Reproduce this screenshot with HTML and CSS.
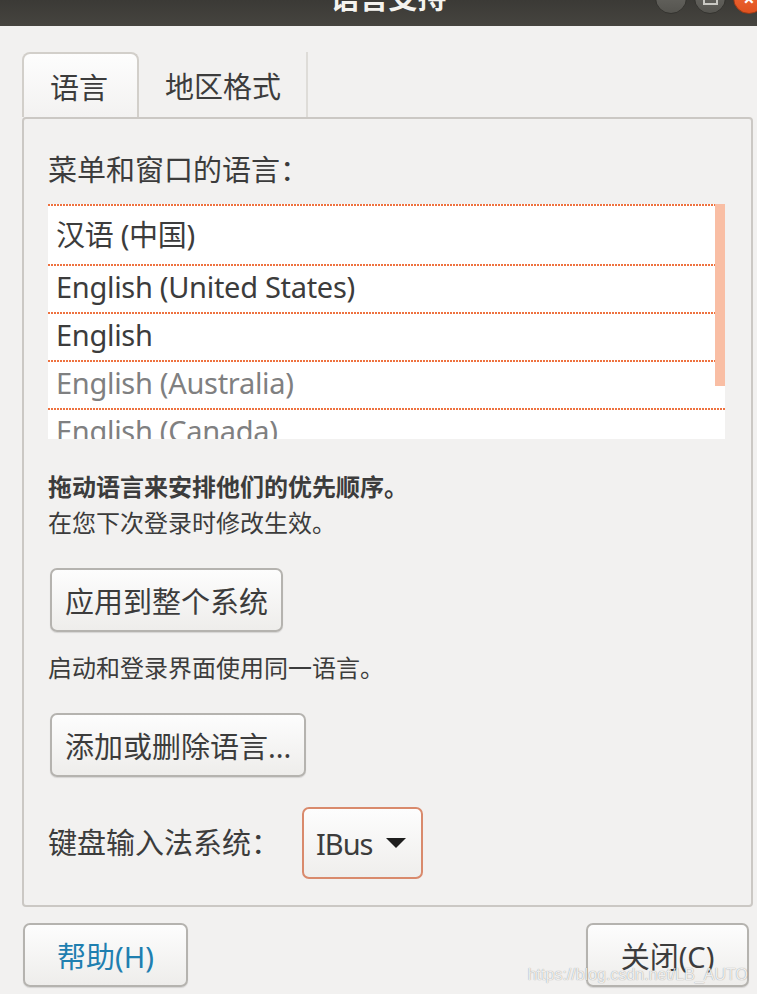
FILE: index.html
```html
<!DOCTYPE html>
<html lang="zh-CN">

<head>
    <meta charset="UTF-8">
    <meta name="viewport" content="width=device-width, initial-scale=1.0">
    <title>语言支持</title>
    <link rel="stylesheet" href="styles.css">
</head>

<body>
    <div class="window">
        <header class="titlebar">
            <div class="title">语言支持</div>
            <div class="controls">
                <span class="ctl"><span class="ctl-min"></span></span>
                <span class="ctl"><span class="ctl-max"></span></span>
                <span class="ctl ctl-close">×</span>
            </div>
        </header>

        <main class="body">
            <nav class="tabs">
                <div class="tab tab-active">语言</div>
                <div class="tab">地区格式</div>
            </nav>

            <section class="frame">
                <div class="frame-label">菜单和窗口的语言：</div>

                <div class="lang-list">
                    <div class="lang-row lang-first">汉语 (中国)</div>
                    <div class="lang-row">English (United States)</div>
                    <div class="lang-row">English</div>
                    <div class="lang-row lang-muted">English (Australia)</div>
                    <div class="lang-row lang-muted">English (Canada)</div>
                    <div class="scroll-thumb"></div>
                </div>

                <p class="hint hint-bold">拖动语言来安排他们的优先顺序。</p>
                <p class="hint">在您下次登录时修改生效。</p>

                <button class="btn btn-apply">应用到整个系统</button>

                <p class="hint hint-login">启动和登录界面使用同一语言。</p>

                <button class="btn btn-add">添加或删除语言...</button>

                <div class="input-row">
                    <span class="frame-label">键盘输入法系统：</span>
                    <button class="combo">
                        <span class="combo-text">IBus</span>
                        <svg class="combo-arrow" width="20" height="10" viewBox="0 0 20 10">
                            <polygon points="0,0 20,0 10,10" fill="#1e1e1e" />
                        </svg>
                    </button>
                </div>
            </section>

            <footer class="actions">
                <button class="btn btn-help">帮助(H)</button>
                <button class="btn btn-close">关闭(C)</button>
            </footer>
        </main>

        <div class="watermark">https://blog.csdn.net/LB_AUTO</div>
    </div>
</body>

</html>
```

FILE: styles.css
```css
body {
    margin: 0;
    background-color: #f2f1f0;
    font-family: "Noto Sans", "Noto Sans CJK SC", sans-serif;
    color: #3c3c3c;
}

.window {
    position: relative;
    width: 757px;
    height: 994px;
    overflow: hidden;
    background-color: #f2f1f0;
}

/* title bar, cut at the top of the shot */
.titlebar {
    display: flex;
    height: 26px;
    overflow: hidden;
    background: linear-gradient(#3b3a36, #46443f);
}

.title {
    flex: 1;
    margin-top: -20px;
    padding-left: 122px;
    text-align: center;
    font-size: 29px;
    line-height: 36px;
    font-weight: bold;
    color: #f4f3ef;
}

.controls {
    display: flex;
    gap: 7px;
    margin-top: -18px;
    margin-right: -8px;
}

.ctl {
    display: flex;
    align-items: center;
    justify-content: center;
    width: 30px;
    height: 30px;
    border: 1px solid #34332f;
    border-radius: 50%;
    background: linear-gradient(#6d6c67, #55544f);
}

.ctl-min {
    width: 12px;
    height: 2px;
    background: #c9c8c3;
}

.ctl-max {
    width: 11px;
    height: 10px;
    border: 2px solid #c9c8c3;
}

.ctl-close {
    border-color: #9c3a16;
    background: linear-gradient(#f26d3d, #e0521f);
    color: #fff;
    font-size: 20px;
    font-weight: bold;
}

.body {
    padding: 26px 4px 0 22px;
}

/* notebook tabs */
.tabs {
    display: flex;
    height: 65px;
}

.tab {
    display: flex;
    align-items: center;
    padding: 0 25px 0 26px;
    font-size: 29px;
    border-right: 2px solid #dedcd8;
}

.tab-active {
    padding: 0 29px 0 26px;
    border: 2px solid #d2cfca;
    border-bottom: none;
    border-radius: 8px 8px 0 0;
    background: linear-gradient(#fdfdfd, #f3f2f1);
}

.frame {
    padding: 33px 26px 26px 24px;
    border: 2px solid #cbc8c4;
    border-radius: 4px;
}

.frame-label {
    font-size: 29px;
    line-height: 36px;
}

/* language list */
.lang-list {
    position: relative;
    height: 235px;
    margin-top: 16px;
    overflow: hidden;
    background: #fff;
}

.lang-row {
    display: flex;
    align-items: center;
    height: 45px;
    padding: 0 0 3px 8px;
    font-size: 29px;
    letter-spacing: -0.3px;
    color: #3c3c3c;
    background-image: linear-gradient(to right, #ee7240 2px, transparent 2px);
    background-size: 3px 2px;
    background-repeat: repeat-x;
    background-position: 0 0;
}

.lang-first {
    height: 57px;
}

.lang-muted {
    color: #7f8081;
}

.scroll-thumb {
    position: absolute;
    top: 0;
    right: 0;
    width: 10px;
    height: 182px;
    background: #f9bea4;
}

.hint {
    margin: 0;
    font-size: 24px;
    line-height: 36px;
}

.hint-bold {
    margin-top: 30px;
    font-weight: bold;
}

.hint-login {
    margin-top: 18px;
}

/* buttons */
.btn {
    display: block;
    height: 64px;
    padding: 0 13px;
    font-family: inherit;
    font-size: 29px;
    color: #3c3c3c;
    border: 2px solid #b5b3af;
    border-radius: 7px;
    background: linear-gradient(#fdfdfd, #eeedeb);
    box-shadow: 0 1px 1px rgba(0, 0, 0, 0.12);
}

.btn-apply {
    margin: 27px 0 0 2px;
}

.btn-add {
    margin: 27px 0 0 2px;
}

.input-row {
    display: flex;
    align-items: center;
    gap: 22px;
    margin-top: 30px;
}

.combo {
    display: flex;
    align-items: center;
    gap: 13px;
    height: 72px;
    padding: 0 15px 0 12px;
    font-family: inherit;
    font-size: 29px;
    color: #3c3c3c;
    border: 2px solid #d98a6c;
    border-radius: 7px;
    background: linear-gradient(#fdfdfd, #efeeec);
}

.combo-text {
    letter-spacing: -1px;
}

.actions {
    display: flex;
    justify-content: space-between;
    padding: 16px 4px 0 1px;
}

.btn-help {
    width: 165px;
    color: #1f7fb0;
}

.btn-close {
    width: 163px;
}

.watermark {
    position: absolute;
    right: 9px;
    bottom: 10px;
    font-family: "Liberation Sans", Arial, sans-serif;
    font-size: 16px;
    color: rgba(255, 255, 255, 0.85);
    text-shadow: 0 0 1px rgba(0, 0, 0, 0.45);
}
```
